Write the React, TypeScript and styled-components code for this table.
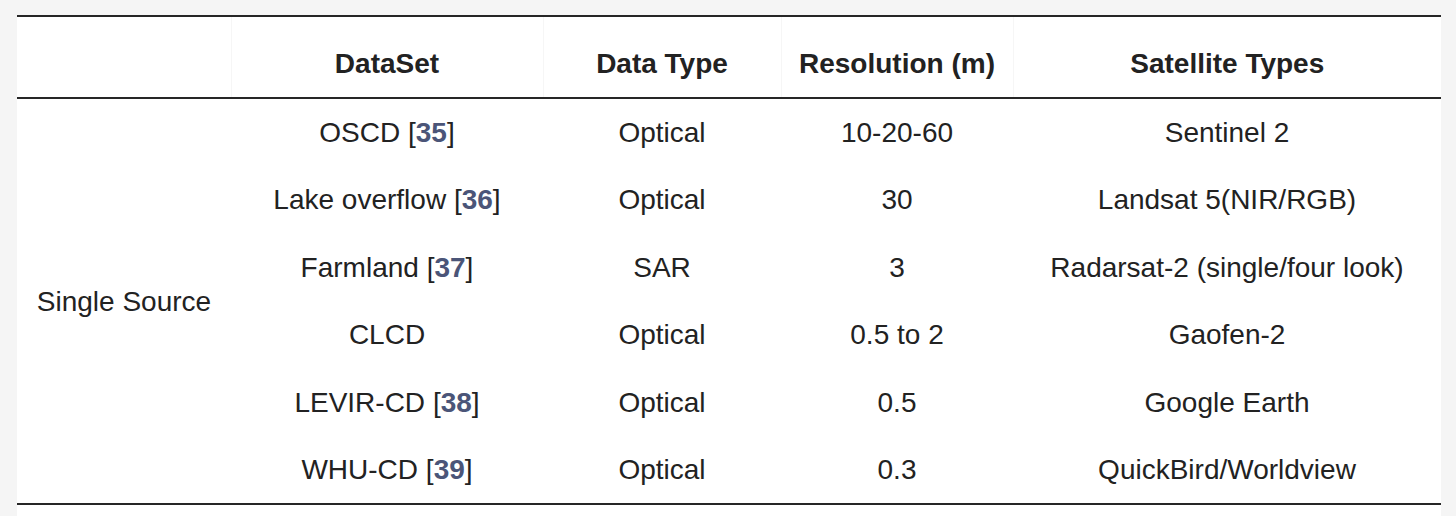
import React from "react";
import styled, { createGlobalStyle } from "styled-components";

const Global = createGlobalStyle`
  html, body { margin: 0; padding: 0; background: #f5f5f5; }
  body { font-family: "Liberation Sans", Arial, Helvetica, sans-serif; }
`;

const Page = styled.div`
  padding: 15px 0 0 17px;
  height: 516px;
  box-sizing: border-box;
  overflow: hidden;
`;

const Panel = styled.div`
  width: 1424px;
  height: 501px;
  background: #ffffff;
`;

const Table = styled.table`
  width: 1424px;
  table-layout: fixed;
  border-collapse: collapse;
  border-top: 2px solid #262626;
  border-bottom: 2px solid #262626;
  font-family: "Liberation Sans", Arial, Helvetica, sans-serif;
  font-size: 28px;
  line-height: 39.4px;
  color: #222222;
`;

const HeadRow = styled.tr`
  height: 82px;
  border-bottom: 2px solid #262626;
`;

const Th = styled.th<{ $first?: boolean }>`
  font-weight: 700;
  text-align: center;
  vertical-align: bottom;
  padding: 0 8px 14px;
  border-left: ${(p) => (p.$first ? "none" : "1px solid #f6f6f6")};
`;

const BodyRow = styled.tr`
  height: 67.33px;
`;

const Td = styled.td`
  text-align: center;
  vertical-align: middle;
  padding: 14px 8px;
  white-space: nowrap;
`;

const Ref = styled.span`
  font-weight: 700;
  color: #4b5578;
`;

type Row = { name: string; ref?: string; type: string; res: string; sat: string };

const rows: Row[] = [
  { name: "OSCD", ref: "35", type: "Optical", res: "10-20-60", sat: "Sentinel 2" },
  { name: "Lake overflow", ref: "36", type: "Optical", res: "30", sat: "Landsat 5(NIR/RGB)" },
  { name: "Farmland", ref: "37", type: "SAR", res: "3", sat: "Radarsat-2 (single/four look)" },
  { name: "CLCD", type: "Optical", res: "0.5 to 2", sat: "Gaofen-2" },
  { name: "LEVIR-CD", ref: "38", type: "Optical", res: "0.5", sat: "Google Earth" },
  { name: "WHU-CD", ref: "39", type: "Optical", res: "0.3", sat: "QuickBird/Worldview" },
];

export default function App() {
  return (
    <>
      <Global />
      <Page>
        <Panel>
          <Table>
            <colgroup>
              <col style={{ width: 214 }} />
              <col style={{ width: 312 }} />
              <col style={{ width: 238 }} />
              <col style={{ width: 232 }} />
              <col style={{ width: 428 }} />
            </colgroup>
            <thead>
              <HeadRow>
                <Th $first></Th>
                <Th>DataSet</Th>
                <Th>Data Type</Th>
                <Th>Resolution (m)</Th>
                <Th>Satellite Types</Th>
              </HeadRow>
            </thead>
            <tbody>
              {rows.map((r, i) => (
                <BodyRow key={r.name}>
                  {i === 0 && <Td rowSpan={rows.length}>Single Source</Td>}
                  <Td>
                    {r.name}
                    {r.ref && (
                      <>
                        {" "}[<Ref>{r.ref}</Ref>]
                      </>
                    )}
                  </Td>
                  <Td>{r.type}</Td>
                  <Td>{r.res}</Td>
                  <Td>{r.sat}</Td>
                </BodyRow>
              ))}
            </tbody>
          </Table>
        </Panel>
      </Page>
    </>
  );
}
